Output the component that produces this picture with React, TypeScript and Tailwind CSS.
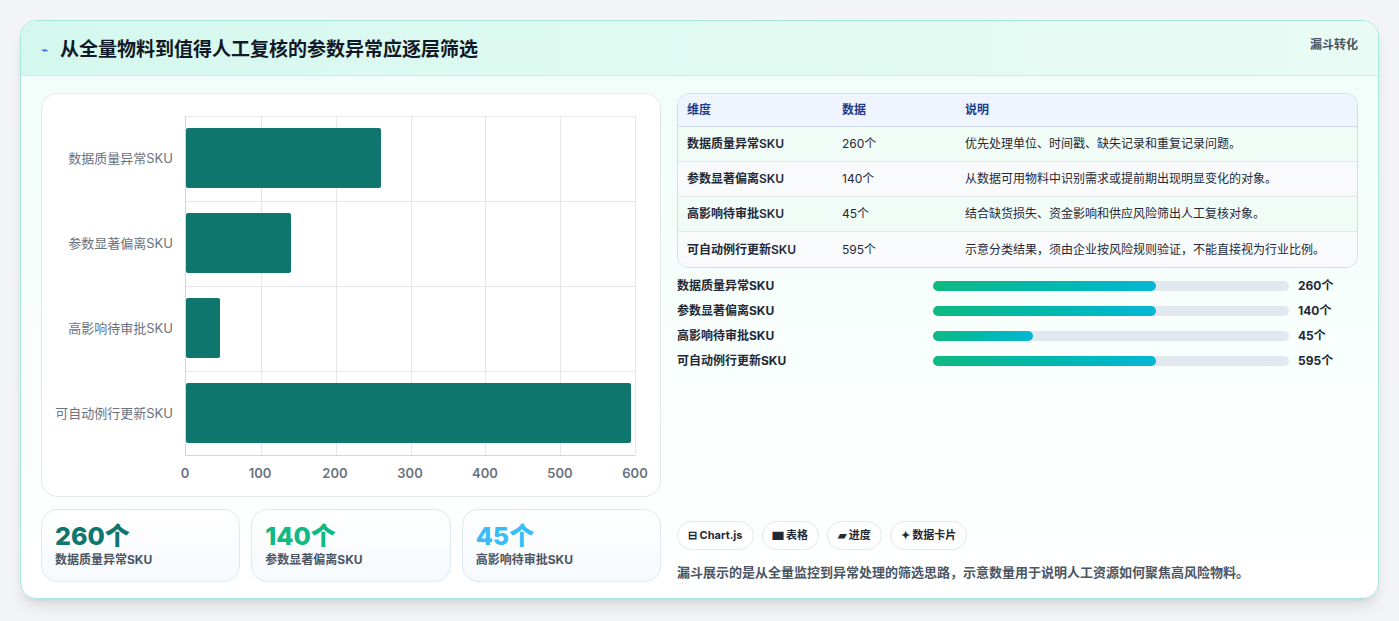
import React from 'react';

const rows = [
  { name: '数据质量异常SKU', v: 260, note: '优先处理单位、时间戳、缺失记录和重复记录问题。', p: 62.5 },
  { name: '参数显著偏离SKU', v: 140, note: '从数据可用物料中识别需求或提前期出现明显变化的对象。', p: 62.5 },
  { name: '高影响待审批SKU', v: 45, note: '结合缺货损失、资金影响和供应风险筛出人工复核对象。', p: 28 },
  { name: '可自动例行更新SKU', v: 595, note: '示意分类结果，须由企业按风险规则验证，不能直接视为行业比例。', p: 62.5 },
];

const ticks = [0, 100, 200, 300, 400, 500, 600];

const App: React.FC = () => {
  return (
    <div className="w-[1399px] h-[621px] bg-[#f3f4f6] p-5 pb-0" style={{ fontFamily: 'Inter, "Noto Sans CJK SC", sans-serif' }}>
      <div className="h-[579px] rounded-2xl border border-[#a7e8dc] bg-gradient-to-b from-[#effdf8] to-white shadow-lg overflow-hidden flex flex-col">
        {/* Header */}
        <div className="h-[55px] shrink-0 bg-gradient-to-r from-[#d5f8ee] to-[#e9fbf4] border-b border-[#c8f1e5] flex items-start justify-between px-5">
          <div className="flex items-center gap-3 mt-[15px]">
            <span className="text-[#2563eb] text-xs">⌁</span>
            <h1 className="text-[19px] font-bold text-[#111827]">从全量物料到值得人工复核的参数异常应逐层筛选</h1>
          </div>
          <span className="mt-4 text-xs font-bold text-[#4b5563]">漏斗转化</span>
        </div>

        <div className="flex gap-4 px-5 pt-[17px]">
          {/* Left */}
          <div className="w-[620px] flex flex-col gap-3">
            <div className="h-[404px] bg-white rounded-2xl border border-[#e5e7eb] relative">
              {/* plot */}
              <div className="absolute left-[143px] top-[22px] w-[450px] h-[340px] border-l border-b border-[#d1d5db]">
                {ticks.slice(1).map((t) => (
                  <div key={t} className="absolute top-0 bottom-0 border-l border-[#e5e7eb]" style={{ left: `${(t / 600) * 100}%` }} />
                ))}
                {[1, 2, 3].map((i) => (
                  <div key={i} className="absolute left-0 right-0 border-t border-[#e5e7eb]" style={{ top: i * 85 }} />
                ))}
                <div className="absolute left-0 right-0 top-0 border-t border-[#e5e7eb]" />
                {rows.map((r, i) => (
                  <div key={r.name} className="absolute left-0 h-[60px] bg-[#0f766e] rounded-[2px]" style={{ top: i * 85 + 12, width: `${(r.v / 600) * 100}%` }} />
                ))}
              </div>
              {rows.map((r, i) => (
                <div key={r.name} className="absolute right-[487px] text-[13px] text-[#6b7280] whitespace-nowrap" style={{ top: 22 + i * 85 + 33 }}>{r.name}</div>
              ))}
              {ticks.map((t) => (
                <div key={t} className="absolute top-[370px] text-[13px] font-semibold text-[#6b7280] -translate-x-1/2" style={{ left: 143 + (t / 600) * 450 }}>{t}</div>
              ))}
            </div>
            <div className="flex gap-[11px]">
              {[
                { v: '260个', l: '数据质量异常SKU', c: 'text-[#0f766e]' },
                { v: '140个', l: '参数显著偏离SKU', c: 'text-[#10b981]' },
                { v: '45个', l: '高影响待审批SKU', c: 'text-[#38bdf8]' },
              ].map((k) => (
                <div key={k.l} className="flex-1 h-[73px] rounded-2xl border border-[#e0e7ef] bg-gradient-to-b from-white to-[#f5f9fd] px-[13px] pt-[10px]">
                  <div className={`text-[25px] font-extrabold leading-8 ${k.c}`}>{k.v}</div>
                  <div className="text-xs font-bold text-[#4b5563]">{k.l}</div>
                </div>
              ))}
            </div>
          </div>

          {/* Right */}
          <div className="flex-1 flex flex-col">
            <div className="rounded-xl border border-[#d1dde9] overflow-hidden bg-white">
              <div className="flex h-[33px] items-center bg-[#eef5ff] border-b border-[#cfd9e6] text-xs font-bold text-[#1e3a8a]">
                <div className="w-[164px] pl-[9px]">维度</div>
                <div className="w-[123px]">数据</div>
                <div>说明</div>
              </div>
              {rows.map((r, i) => (
                <div key={r.name} className={`flex h-[35px] items-center text-xs text-[#1f2937] ${i % 2 === 0 ? 'bg-[#f1fcf7]' : 'bg-[#f8fafc]'} ${i < 3 ? 'border-b border-[#e5e7eb]' : ''}`}>
                  <div className="w-[164px] pl-[9px] font-semibold">{r.name}</div>
                  <div className="w-[123px]">{r.v}个</div>
                  <div>{r.note}</div>
                </div>
              ))}
            </div>
            <div className="flex flex-col gap-[13px] mt-[12px]">
              {rows.map((r) => (
                <div key={r.name} className="flex items-center h-3 text-xs font-bold text-[#1f2937]">
                  <div className="w-[256px]">{r.name}</div>
                  <div className="w-[356px] h-[10px] rounded-full bg-[#e2e8f0]">
                    <div className="h-full rounded-full bg-gradient-to-r from-[#10b981] to-[#06b6d4]" style={{ width: `${r.p}%` }} />
                  </div>
                  <div className="ml-[9px]">{r.v}个</div>
                </div>
              ))}
            </div>
            <div className="mt-auto flex gap-2 mb-[13px]">
              {['⊟ Chart.js', '▆ 表格', '▰ 进度', '✦ 数据卡片'].map((t) => (
                <div key={t} className="h-[29px] px-[10px] rounded-full border border-[#e5e7eb] bg-white flex items-center text-[11px] font-bold text-[#1f2937]">{t}</div>
              ))}
            </div>
            <div className="text-[13px] text-[#4b5563] font-semibold">漏斗展示的是从全量监控到异常处理的筛选思路，示意数量用于说明人工资源如何聚焦高风险物料。</div>
          </div>
        </div>
      </div>
    </div>
  );
};

export default App;
